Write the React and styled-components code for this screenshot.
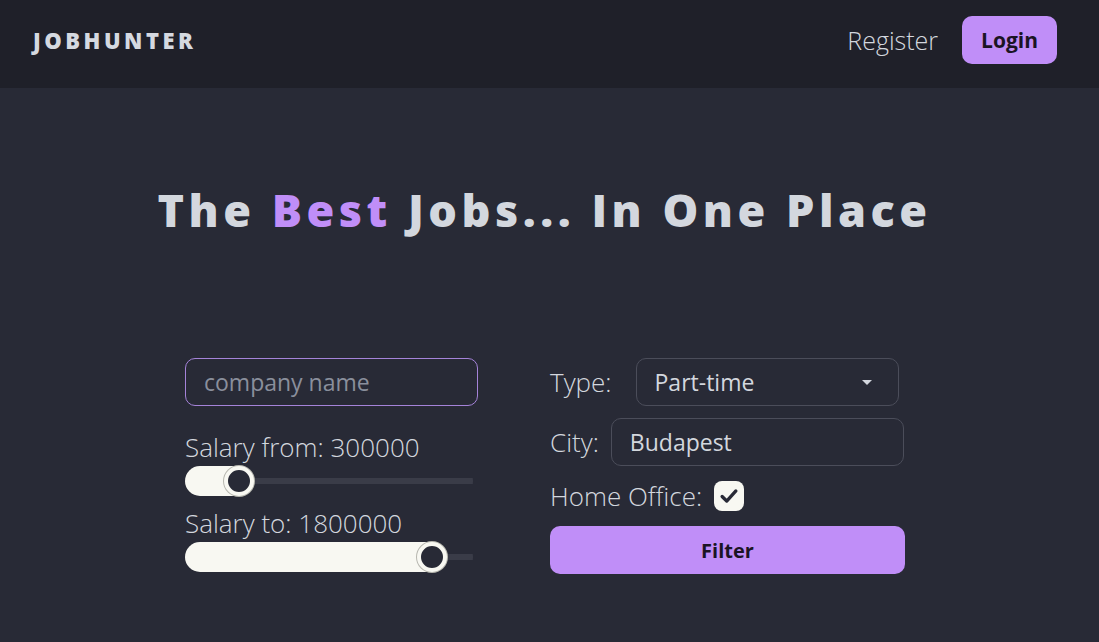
import React, { useState } from 'react';
import styled, { createGlobalStyle } from 'styled-components';

const GlobalStyle = createGlobalStyle`
    html, body {
        margin: 0;
        padding: 0;
        background: #282a36;
        font-family: 'Open Sans', 'Noto Sans', sans-serif;
        color: #d3d7de;
    }
    * {
        box-sizing: border-box;
    }
`;

const PURPLE = '#c08ef8';
const CREAM = '#f8f8f2';

const Page = styled.div`
    min-height: 642px;
    background: #282a36;
`;

const Navbar = styled.header`
    height: 88px;
    background: #1f2029;
    display: flex;
    align-items: flex-start;
    justify-content: space-between;
    padding: 16px 42px 0 33px;
`;

const Logo = styled.div`
    height: 48px;
    display: flex;
    align-items: center;
    font-size: 22px;
    font-weight: 800;
    letter-spacing: 3.5px;
    color: #d5d9e0;
`;

const NavLinks = styled.nav`
    display: flex;
    align-items: center;
    gap: 24px;
`;

const NavLink = styled.a`
    font-size: 25px;
    font-weight: 300;
    color: #d3d7de;
    cursor: pointer;
`;

const PrimaryButton = styled.button`
    height: 48px;
    padding: 0 ${p => (p.$wide ? '0' : '19px')};
    width: ${p => (p.$wide ? '100%' : 'auto')};
    border: none;
    border-radius: 10px;
    background: ${PURPLE};
    color: #1b1424;
    font-family: inherit;
    font-size: ${p => (p.$wide ? 20 : 21)}px;
    font-weight: 700;
    cursor: pointer;
`;

const Hero = styled.h1`
    margin: 0;
    padding: 96px 10px 0 0;
    height: 270px;
    text-align: center;
    font-size: 45px;
    font-weight: 800;
    letter-spacing: 4.5px;
    color: #d3d7de;
    line-height: 52px;
`;

const Accent = styled.span`
    color: ${PURPLE};
`;

const Form = styled.form`
    display: flex;
    justify-content: center;
    gap: 72px;
    padding-right: 9px;
`;

const Column = styled.div`
    display: flex;
    flex-direction: column;
    width: ${p => p.$width}px;
`;

const TextInput = styled.input`
    height: 48px;
    width: ${p => (p.$width ? `${p.$width}px` : '100%')};
    padding: 0 18px;
    border: 1px solid ${p => (p.$accent ? '#a583d9' : '#4b4d5a')};
    border-radius: 10px;
    background: transparent;
    color: #d3d7de;
    font-family: inherit;
    font-size: 23px;
    outline: none;

    &::placeholder {
        color: #8a8f9c;
    }
`;

const Label = styled.div`
    font-size: 26px;
    font-weight: 300;
    color: #d3d7de;
    line-height: 30px;
    white-space: nowrap;
`;

const SliderLabel = styled(Label)`
    margin-top: ${p => p.$mt}px;
    margin-bottom: 4px;
`;

const Rail = styled.div`
    width: 288px;
    height: 30px;
    border-radius: 15px;
    background: linear-gradient(#3a3c48, #3a3c48) center / 100% 6px no-repeat;
`;

const Fill = styled.div`
    height: 30px;
    border-radius: 15px;
    background: ${CREAM};
    display: flex;
    justify-content: flex-end;
`;

const Thumb = styled.div`
    width: 30px;
    height: 30px;
    border-radius: 50%;
    background: #282a36;
    border: 4px solid ${CREAM};
    box-shadow: 0 0 0 1px #b8b8b0;
`;

const Row = styled.div`
    display: flex;
    align-items: center;
    gap: ${p => p.$gap}px;
    margin-bottom: ${p => p.$mb}px;
`;

const SelectBox = styled.div`
    width: 263px;
    height: 48px;
    border: 1px solid #4b4d5a;
    border-radius: 10px;
    display: flex;
    align-items: center;
    justify-content: space-between;
    padding: 0 26px 0 18px;
    font-size: 23px;
    color: #d3d7de;
`;

const Caret = styled.span`
    width: 0;
    height: 0;
    border-left: 5px solid transparent;
    border-right: 5px solid transparent;
    border-top: 5px solid #d3d7de;
`;

const Checkbox = styled.div`
    width: 30px;
    height: 30px;
    flex: none;
    border-radius: 8px;
    background: ${CREAM};
    display: flex;
    align-items: center;
    justify-content: center;
`;

const MAX = 2000000;

function Slider({ value }) {
    const p = value / MAX;
    const width = 30 + (288 - 30) * p;
    return (
        <Rail>
            <Fill style={{ width }}>
                <Thumb />
            </Fill>
        </Rail>
    );
}

export default function App() {
    const [from] = useState(300000);
    const [to] = useState(1800000);

    return (
        <Page>
            <GlobalStyle />
            <Navbar>
                <Logo>JOBHUNTER</Logo>
                <NavLinks>
                    <NavLink>Register</NavLink>
                    <PrimaryButton type="button">Login</PrimaryButton>
                </NavLinks>
            </Navbar>
            <Hero>
                The <Accent>Best</Accent> Jobs... In One Place
            </Hero>
            <Form onSubmit={e => e.preventDefault()}>
                <Column $width={293}>
                    <TextInput $accent placeholder="company name" />
                    <SliderLabel $mt={26}>Salary from: {from}</SliderLabel>
                    <Slider value={from} />
                    <SliderLabel $mt={12}>Salary to: {to}</SliderLabel>
                    <Slider value={to} />
                </Column>
                <Column $width={355}>
                    <Row $gap={24} $mb={12}>
                        <Label>Type:</Label>
                        <SelectBox>
                            <span>Part-time</span>
                            <Caret />
                        </SelectBox>
                    </Row>
                    <Row $gap={12} $mb={15}>
                        <Label>City:</Label>
                        <TextInput $width={293} defaultValue="Budapest" />
                    </Row>
                    <Row $gap={12} $mb={15}>
                        <Label>Home Office:</Label>
                        <Checkbox>
                            <svg width="22" height="22" viewBox="0 0 24 24" fill="none" stroke="#282a36" strokeWidth="3.6" strokeLinecap="round" strokeLinejoin="round">
                                <path d="M4.5 12.5l5 5L19.5 6.5" />
                            </svg>
                        </Checkbox>
                    </Row>
                    <PrimaryButton type="submit" $wide>
                        Filter
                    </PrimaryButton>
                </Column>
            </Form>
        </Page>
    );
}
